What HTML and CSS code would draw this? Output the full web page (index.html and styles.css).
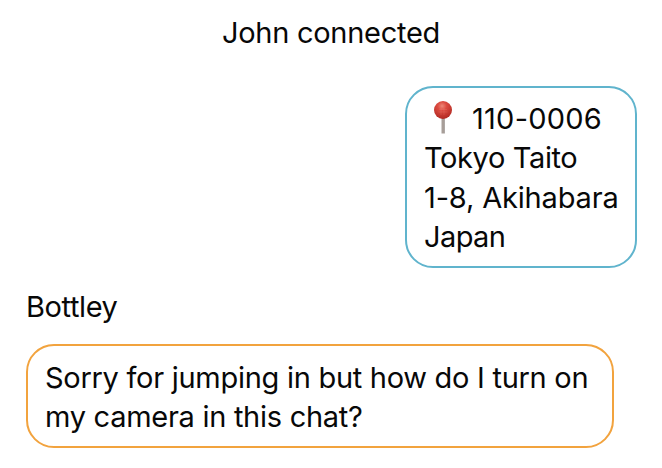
FILE: index.html
```html
<!DOCTYPE html>
<html lang="en">
<head>
<meta charset="utf-8">
<title>Chat</title>
<link rel="stylesheet" href="styles.css">
</head>
<body>
<main class="chat">
  <p class="status">John connected</p>
  <section class="bubble sent">
    <div class="line"><svg class="pin" viewBox="0 0 20 36" width="20" height="36">
      <defs>
        <radialGradient id="head" cx="45%" cy="28%" r="70%"><stop offset="0" stop-color="#ee8878"/><stop offset=".35" stop-color="#dc4b40"/><stop offset="1" stop-color="#b32b24"/></radialGradient>
        <linearGradient id="needle"><stop offset="0" stop-color="#8f8580"/><stop offset=".5" stop-color="#b9b0aa"/><stop offset="1" stop-color="#756b66"/></linearGradient>
      </defs>
      <path d="M8.6 17h3v16.5h-3z" fill="url(#needle)"/>
      <circle cx="10" cy="10" r="9" fill="url(#head)"/>
      <path d="M6 9.5h8M5.5 12h9M8 8v7M11 8v7" stroke="#f4a092" stroke-width=".5" opacity=".35"/>
    </svg><span class="zip">110-0006</span></div>
    <div class="line city">Tokyo Taito</div>
    <div class="line street">1-8, Akihabara</div>
    <div class="line country">Japan</div>
  </section>
  <p class="sender">Bottley</p>
  <section class="bubble received">
    <div class="line">Sorry for jumping in but how do I turn on</div>
    <div class="line">my camera in this chat?</div>
  </section>
</main>
</body>
</html>
```

FILE: styles.css
```css
* { box-sizing: border-box; }
body {
  margin: 0;
  background: #fff;
  color: #080808;
  font: 29px/39px Inter, "Liberation Sans", sans-serif;
  letter-spacing: -0.28px;
}
p { margin: 0; }
.chat {
  display: flex;
  flex-direction: column;
  width: 662px;
  height: 468px;
  padding: 13px 26px 0;
}
.status { text-align: center; }
.line { display: flex; white-space: nowrap; }
.bubble { border: 2px solid; border-radius: 28px; }
.sent {
  align-self: flex-end;
  width: 232px;
  height: 182px;
  margin: 34px -1px 0 0;
  padding: 11px 0 0 17px;
  border-color: #60b4cd;
  line-height: 39.3px;
}
.pin { flex: none; margin: 1px 19px 0 9px; height: 36px; margin-bottom: -10px; }
.zip { letter-spacing: 0.25px; }
.city { letter-spacing: -0.38px; }
.street { letter-spacing: -0.16px; }
.country { letter-spacing: -0.6px; }
.sender { margin-top: 19px; letter-spacing: -0.4px; }
.received {
  width: 588px;
  height: 104px;
  margin-top: 18px;
  padding: 12px 0 0 17px;
  border-color: #f2a33e;
}
```
